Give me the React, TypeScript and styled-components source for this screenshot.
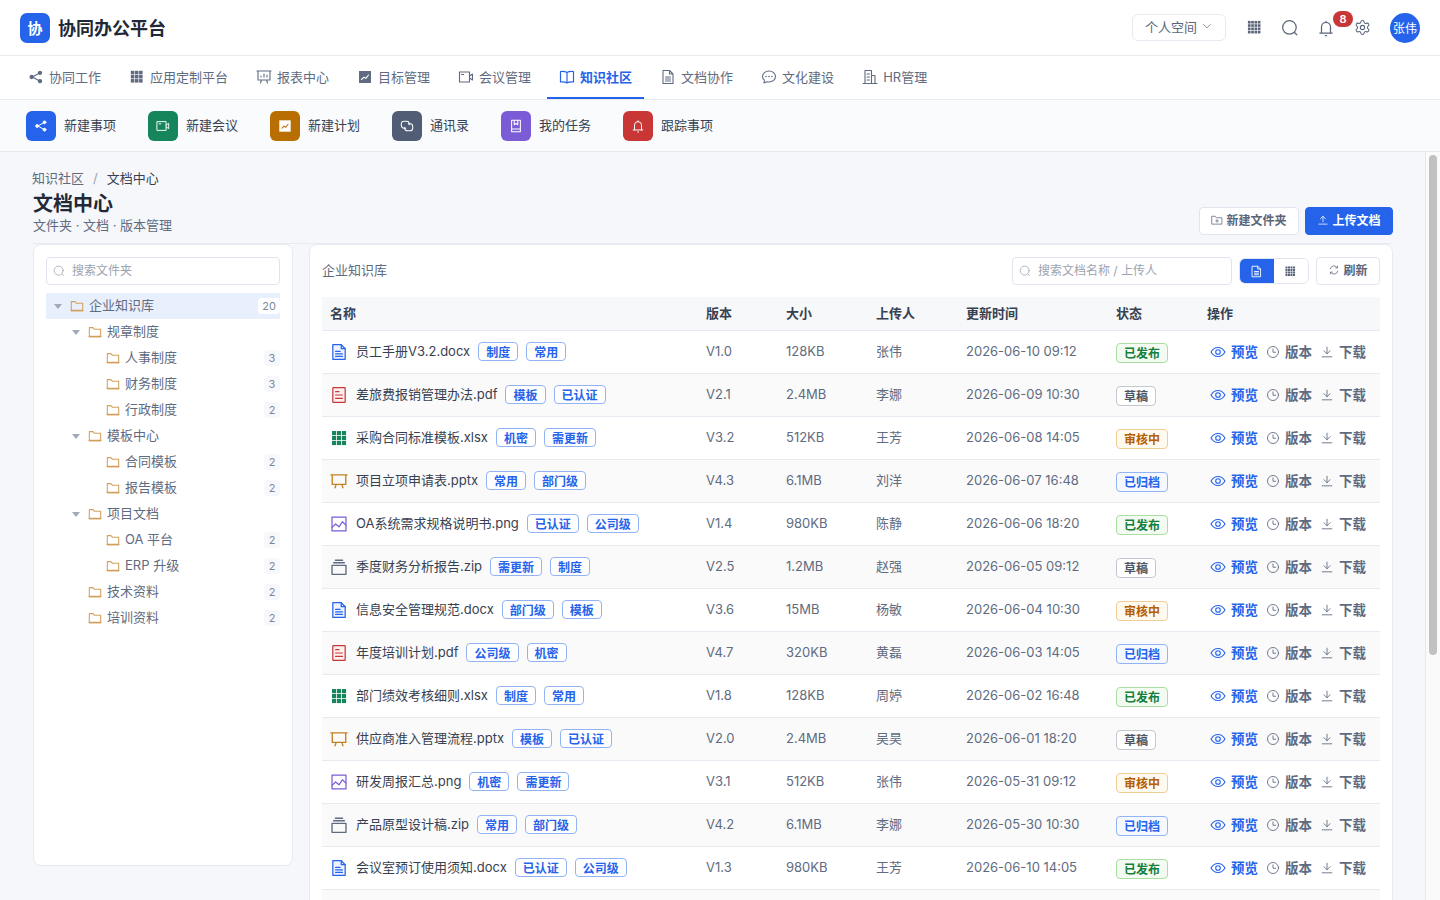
import React from "react";
import styled, { createGlobalStyle } from "styled-components";

const Global = createGlobalStyle`
  * { box-sizing: border-box; }
  html, body { margin: 0; padding: 0; height: 100%; overflow: hidden; }
  body { font-family: Inter, "Noto Sans CJK SC", "Noto Sans", sans-serif; color: #1f2937; background: #f6f7fb; }
  input { font-family: inherit; }
  input::placeholder { color: #9ca3af; }
`;

const Shell = styled.div`display:flex;flex-direction:column;height:100vh;`;
const Header = styled.header`flex:none;height:56px;background:#fff;border-bottom:1px solid #e8eaef;display:flex;align-items:center;padding:0 20px;`;
const Logo = styled.div`width:30px;height:30px;border-radius:7px;background:#2563eb;color:#fff;font-size:15px;font-weight:700;display:flex;align-items:center;justify-content:center;padding-bottom:1px;`;
const Brand = styled.div`margin-left:8px;font-size:18px;font-weight:600;color:#1f2937;padding-bottom:2px;`;
const HeaderRight = styled.div`margin-left:auto;display:flex;align-items:center;`;
const SpaceSelect = styled.div`width:94px;height:27px;border:1px solid #e8eaf2;border-radius:6px;display:flex;align-items:center;padding:0 0 3px 12px;gap:4px;font-size:13px;color:#5b6579;margin-right:10px;`;
const HeadIcon = styled.span`position:relative;width:36px;height:30px;display:flex;align-items:center;justify-content:center;color:#5b6579;`;
const Badge = styled.span`position:absolute;left:25px;top:-2px;width:20px;height:16px;border-radius:8px;background:#c93636;color:#fff;font-size:11px;font-weight:600;display:flex;align-items:center;justify-content:center;`;
const Avatar = styled.div`margin-left:10px;width:30px;height:30px;border-radius:50%;background:#2563eb;color:#fff;font-size:12px;display:flex;align-items:center;justify-content:center;`;

const Nav = styled.nav`flex:none;height:44px;background:#fff;border-bottom:1px solid #e8eaef;display:flex;gap:4px;padding-left:16px;`;
const NavItem = styled.a<{ $active?: boolean }>`height:43px;display:flex;align-items:center;gap:5px;padding:0 12px 1px;font-size:13px;
  color:${p => (p.$active ? "#2563eb" : "#5f6b80")};font-weight:${p => (p.$active ? 600 : 400)};
  box-shadow:${p => (p.$active ? "inset 0 -2px 0 #2563eb" : "none")};`;
const NavLabel = styled.span`padding-bottom:2px;`;

const Quick = styled.div`flex:none;height:52px;background:#fafbfd;border-bottom:1px solid #e8eaef;display:flex;align-items:center;gap:32px;padding-left:26px;`;
const QuickItem = styled.div`display:flex;align-items:center;gap:8px;font-size:13px;color:#374151;`;
const QuickIcon = styled.span<{ $bg: string }>`width:30px;height:30px;border-radius:6px;background:${p => p.$bg};color:#fff;display:flex;align-items:center;justify-content:center;`;
const QuickLabel = styled.span`padding-bottom:2px;`;

const Body = styled.div`flex:1;min-height:0;display:flex;`;
const Main = styled.main`flex:1;min-width:0;overflow-y:auto;scrollbar-width:none;background:#f6f7fb;padding:17px 32px 32px 33px;`;
const ScrollRail = styled.div`flex:none;width:15px;background:#fafafa;border-left:1px solid #e8e8e8;padding:3px 3px 0;`;
const ScrollThumb = styled.div`height:500px;border-radius:4px;background:#c1c1c1;`;

const PageHead = styled.div`display:flex;justify-content:space-between;align-items:flex-end;height:75px;border-bottom:1px solid #e8eaf0;padding-bottom:8px;`;
const PageInfo = styled.div`margin-bottom:1px;`;
const Crumbs = styled.div`font-size:13px;line-height:18px;color:#374151;margin-left:-1px;display:flex;`;
const CrumbLink = styled.span`color:#5f6b80;`;
const CrumbSep = styled.span`color:#9ca3af;margin:0 9px;`;
const PageTitle = styled.h1`margin:5px 0 0;font-size:20px;line-height:24px;font-weight:700;color:#1f2937;`;
const PageSub = styled.div`margin-top:0;font-size:13px;line-height:18px;color:#5f6b80;`;
const HeadActions = styled.div`display:flex;gap:6px;`;
const Button = styled.button<{ $primary?: boolean }>`height:28px;border-radius:4px;padding:0 11.5px 3px;display:flex;align-items:center;gap:3px;white-space:nowrap;font:600 12px Inter,"Noto Sans CJK SC",sans-serif;
  background:${p => (p.$primary ? "#2563eb" : "#fff")};color:${p => (p.$primary ? "#fff" : "#5b6579")};border:1px solid ${p => (p.$primary ? "#2563eb" : "#e1e4ee")};`;

const Columns = styled.div`display:grid;grid-template-columns:260px 1084px;gap:16px;align-items:start;`;
const TreePanel = styled.aside`height:622px;background:#fff;border:1px solid #e8eaf2;border-radius:8px;padding:12px;`;
const TablePanel = styled.section`background:#fff;border:1px solid #e8eaf2;border-radius:8px;padding:12px;`;
const SearchBox = styled.label<{ $w?: number }>`height:28px;width:${p => (p.$w ? p.$w + "px" : "100%")};border:1px solid #e1e4ee;border-radius:4px;display:flex;align-items:center;gap:5px;padding:0 6px;color:#a3a9b5;background:#fff;`;
const SearchInput = styled.input`border:0;outline:0;flex:1;min-width:0;font-size:12px;background:transparent;color:#374151;padding:0 2px 1px;`;
const Tree = styled.div`margin-top:8px;`;
const TreeRow = styled.div<{ $level: number; $selected?: boolean }>`height:26px;display:flex;align-items:center;font-size:13px;color:#5f6b80;padding-left:${p => 8 + p.$level * 18}px;background:${p => (p.$selected ? "#e8effd" : "transparent")};`;
const Caret = styled.span<{ $hidden?: boolean }>`width:0;height:0;border-left:4px solid transparent;border-right:4px solid transparent;border-top:5px solid ${p => (p.$hidden ? "transparent" : "#a3a9b5")};margin-right:7.5px;flex:none;`;
const FolderWrap = styled.span`display:flex;margin-right:5.5px;color:#d2a05c;`;
const TreeLabel = styled.span`padding-bottom:3px;`;
const Count = styled.span<{ $selected?: boolean }>`margin-left:auto;min-width:16px;height:16px;padding:0 4px;border-radius:4px;font-size:11px;display:flex;align-items:center;justify-content:center;color:#7d8799;background:${p => (p.$selected ? "#fff" : "#f7f8fb")};`;

const Toolbar = styled.div`display:flex;align-items:center;height:28px;margin-bottom:12px;`;
const LibTitle = styled.div`font-size:13px;color:#5f6b80;margin-right:auto;padding-bottom:3px;`;
const Segment = styled.div`margin-left:7px;height:26px;width:70px;border:1px solid #e1e4ee;border-radius:6px;display:flex;overflow:hidden;`;
const SegBtn = styled.span<{ $on?: boolean }>`flex:1;display:flex;align-items:center;justify-content:center;background:${p => (p.$on ? "#2563eb" : "#fff")};color:${p => (p.$on ? "#fff" : "#5b6579")};`;
const RefreshBtn = styled(Button)`margin-left:7px;`;

const Table = styled.table`width:100%;table-layout:fixed;border-collapse:collapse;font-size:13px;`;
const Th = styled.th<{ $w?: number }>`width:${p => (p.$w ? p.$w + "px" : "auto")};height:33px;text-align:left;padding:0 8px 1px;font-weight:600;font-size:13px;color:#374151;background:#f7f8fa;border-bottom:1px solid #e8eaf2;`;
const Tr = styled.tr<{ $alt: boolean }>`background:${p => (p.$alt ? "#fafafa" : "#fff")};`;
const Td = styled.td`height:43px;padding:0 8px 2px;border-bottom:1px solid #e8eaf2;color:#5f6b80;white-space:nowrap;`;
const NameCell = styled.div`display:flex;align-items:center;color:#374151;`;
const FileIcon = styled.span<{ $c: string; $t: string }>`display:flex;width:18px;margin:2px 8px 0 0;color:${p => p.$c};--tint:${p => p.$t};`;
const Tag = styled.span`margin:2px 0 0 8px;height:19px;padding:0 7px 1px;border:1px solid #93b4f4;border-radius:4px;background:#fff;color:#2563eb;font-size:12px;font-weight:600;display:flex;align-items:center;`;
const Status = styled.span<{ $k: string }>`display:inline-flex;height:20px;align-items:center;padding:0 7px 1px;border-radius:4px;font-size:12px;font-weight:600;position:relative;top:2px;
  color:${p => ({ pub: "#15803d", draft: "#4b5563", rev: "#b45f06", arc: "#2563eb" } as Record<string, string>)[p.$k]};
  border:1px solid ${p => ({ pub: "#a9dfa0", draft: "#c4c8d0", rev: "#f0cd94", arc: "#93b4f4" } as Record<string, string>)[p.$k]};
  background:${p => ({ pub: "#f3fbf3", draft: "#fff", rev: "#fffaf0", arc: "#f5f8ff" } as Record<string, string>)[p.$k]};`;
const Ops = styled.div`display:flex;align-items:center;margin-left:3px;`;
const Op = styled.span<{ $primary?: boolean }>`display:flex;align-items:center;gap:5px;margin-right:8px;font-size:13.5px;font-weight:600;color:${p => (p.$primary ? "#2563eb" : "#5f6b80")};`;
const OpIcon = styled.span`display:flex;margin-top:2px;`;

type IP = { s?: number };
const Svg: React.FC<React.PropsWithChildren<IP & { sw?: number }>> = ({ s = 14, sw = 1.4, children }) => (
  <svg width={s} height={s} viewBox="0 0 16 16" fill="none" stroke="currentColor" strokeWidth={sw} strokeLinecap="round" strokeLinejoin="round">{children}</svg>
);
const IShare = ({ s }: IP) => <Svg s={s} sw={1.1}><path d="M11.5 4 4.5 8l7 4" /><circle cx="12" cy="3.8" r="1.6" fill="currentColor" /><circle cx="3.6" cy="8" r="1.6" fill="currentColor" /><circle cx="12" cy="12.2" r="1.6" fill="currentColor" /></Svg>;
const IGrid = ({ s, n = 3 }: IP & { n?: number }) => {
  const step = 12.4 / n;
  const pos = Array.from({ length: n }, (_, i) => 1.8 + i * step);
  return <Svg s={s}><g fill="currentColor" stroke="none">{pos.flatMap(x => pos.map(y => <rect key={x + "-" + y} x={x} y={y} width={step - 0.6} height={step - 0.6} />))}</g></Svg>;
};
const IReport = ({ s }: IP) => <Svg s={s} sw={1.1}><path d="M1 2h14M2 2v9h12V2M5.5 11l-1 3M10.5 11l1 3" /><path d="M5 8V7M8 8V5M11 8V6" /></Svg>;
const ITarget = ({ s }: IP) => <Svg s={s}><rect x="2" y="2" width="12" height="12" fill="currentColor" stroke="none" /><path d="M4.5 10.5 7 8.2l1.8 1.2L11.5 6" stroke="#fff" strokeWidth="1.1" /></Svg>;
const IPlan = ({ s }: IP) => <Svg s={s}><rect x="1.5" y="1.5" width="13" height="13" fill="#fff" stroke="none" /><path d="M4.5 10.5 7 8.2l1.8 1.2L11.5 6" stroke="#b86e00" strokeWidth="1.2" /></Svg>;
const IVideo = ({ s }: IP) => <Svg s={s} sw={1.1}><rect x="1.5" y="3" width="10" height="10" /><path d="M11.5 7 14.5 5v6l-3-2" /><path d="M3.5 5.5h2" /></Svg>;
const IBook = ({ s }: IP) => <Svg s={s} sw={1.2}><path d="M8 3.5C6.5 2.5 4 2.3 1.5 2.5v10.5c2.5-.2 5 0 6.5 1 1.5-1 4-1.2 6.5-1V2.5C12 2.3 9.5 2.5 8 3.5ZM8 3.5V14" /></Svg>;
const IDoc = ({ s }: IP) => <Svg s={s} sw={1.1}><path d="M3 1.5h6.5L13 5v9.5H3ZM9.5 1.5V5H13M5.5 8h5M5.5 10h5M5.5 12h5" /></Svg>;
const IChat = ({ s }: IP) => <Svg s={s} sw={1.1}><path d="M8 2c3.6 0 6.5 2.5 6.5 5.5S11.6 13 8 13c-.8 0-1.5-.1-2.2-.3L3 14l.4-2.8C2.2 10.2 1.5 8.9 1.5 7.5 1.5 4.5 4.4 2 8 2Z" /><g fill="currentColor" stroke="none"><circle cx="5" cy="7.5" r=".8" /><circle cx="8" cy="7.5" r=".8" /><circle cx="11" cy="7.5" r=".8" /></g></Svg>;
const IBuilding = ({ s }: IP) => <Svg s={s} sw={1.1}><path d="M1 14.5h14M3 14.5V1.5h6.5v13M9.5 6.5H13v8M5 5h2.5M5 8h2.5M5 11h2.5" /></Svg>;
const ISearch = ({ s }: IP) => <Svg s={s} sw={1.1}><circle cx="7.5" cy="7.5" r="6" /><path d="m12 12 2 2" /></Svg>;
const IBell = ({ s }: IP) => <Svg s={s} sw={1.1}><path d="M2.5 12.5h11M4 12.5V7a4 4 0 0 1 8 0v5.5M7.5 14.8h1M8 3V2" /></Svg>;
const IGear = ({ s }: IP) => <svg width={s} height={s} viewBox="0 0 24 24" fill="none" stroke="currentColor" strokeWidth="1.5" strokeLinecap="round" strokeLinejoin="round"><path d="M9.671 4.136a2.34 2.34 0 0 1 4.659 0 2.34 2.34 0 0 0 3.319 1.915 2.34 2.34 0 0 1 2.33 4.033 2.34 2.34 0 0 0 0 3.831 2.34 2.34 0 0 1-2.33 4.033 2.34 2.34 0 0 0-3.319 1.915 2.34 2.34 0 0 1-4.659 0 2.34 2.34 0 0 0-3.32-1.915 2.34 2.34 0 0 1-2.33-4.033 2.34 2.34 0 0 0 0-3.831A2.34 2.34 0 0 1 6.35 6.051a2.34 2.34 0 0 0 3.319-1.915" /><circle cx="12" cy="12" r="3" /></svg>;
const IChevron = ({ s }: IP) => <Svg s={s} sw={1}><path d="m3.5 6 4.5 4.5L12.5 6" /></Svg>;
const IChain = ({ s }: IP) => <Svg s={s} sw={1.2}><path d="M6.5 10.5H4.5a3 3 0 0 1-3-3V5.5a3 3 0 0 1 3-3h3a3 3 0 0 1 3 3v1" /><path d="M9.5 5.5h2a3 3 0 0 1 3 3v2a3 3 0 0 1-3 3h-3a3 3 0 0 1-3-3v-1" /></Svg>;
const ITaskBook = ({ s }: IP) => <Svg s={s} sw={1.2}><path d="M3 1.5h10v13H3ZM3 11.5h10M6 1.5v5l2-1.3 2 1.3v-5" /></Svg>;
const IFolder = ({ s = 14 }: IP) => <Svg s={s} sw={1.2}><path d="M1.5 3h4.2l1.5 1.8h7.3v8.7h-13Z" /><path d="M1.5 13.2h13" strokeWidth="1.8" /></Svg>;
const IFolderAdd = ({ s }: IP) => <Svg s={s} sw={1}><path d="M1.5 3h4.2l1.5 2h7.3v8.5h-13ZM8 7.5V11M6.3 9.2h3.4" /></Svg>;
const IUpload = ({ s }: IP) => <Svg s={s} sw={1}><path d="M2.5 13.5h11M8 10.5V3M4.5 6.5 8 3l3.5 3.5" /></Svg>;
const IDownload = ({ s }: IP) => <Svg s={s} sw={1}><path d="M2.5 13.5h11M8 2.5V10M4.5 6.5 8 10l3.5-3.5" /></Svg>;
const IRefresh = ({ s }: IP) => <Svg s={s} sw={1}><path d="M3 6.5A5.2 5.2 0 0 1 12.5 5M13 9.5A5.2 5.2 0 0 1 3.5 11M12.7 2.8v2.4h-2.4M3.3 13.2v-2.4h2.4" /></Svg>;
const IEye = ({ s }: IP) => <Svg s={s} sw={1.1}><path d="M1 8c1.7-3 4-4.5 7-4.5S13.300 5 15 8c-1.700 3-4 4.500-7 4.500S2.700 11 1 8Z" /><circle cx="8" cy="8" r="2.300" /></Svg>;
const IClock = ({ s }: IP) => <Svg s={s} sw={1}><circle cx="8" cy="8" r="6.3" /><path d="M8 4.5v3.8h3" /></Svg>;
const FDoc = ({ s }: IP) => <Svg s={s} sw={1.1}><path d="M2.5 1.5H10l3.5 3.5v9.5h-11Z" fill="var(--tint)" /><path d="M10 1.5V5h3.500M5 7.500h4M5 9.700h6M5 11.900h6" /></Svg>;
const FPdf = ({ s }: IP) => <Svg s={s} sw={1.1}><rect x="2.5" y="1.5" width="11" height="13" rx="0.5" fill="var(--tint)" /><path d="M5 5h3M5 8h6M5 11h6" /></Svg>;
const FXls = ({ s }: IP) => <Svg s={s}><g fill="currentColor" stroke="none">{[1.8, 6.2, 10.6].flatMap(x => [1.8, 6.2, 10.6].map(y => <rect key={x + "-" + y} x={x} y={y} width="3.7" height="3.7" />))}</g></Svg>;
const FPpt = ({ s }: IP) => <Svg s={s} sw={1.2}><path d="M.8 2.5h14.4M2 2.5V11h12V2.5M5.5 11l-1 3M10.5 11l1 3" /></Svg>;
const FImg = ({ s }: IP) => <Svg s={s} sw={1.1}><rect x="1.8" y="1.8" width="12.4" height="12.4" /><path d="m1.8 11 3.2-3 3 2.5 3-4.5 3.2 3" /></Svg>;
const FZip = ({ s }: IP) => <Svg s={s} sw={1.2}><path d="M1.8 6.5h12.4v8H1.8ZM3.2 4.2h9.6M4.800 2h6.400" /></Svg>;

const navs: [string, React.FC<IP>, boolean?][] = [["协同工作", IShare], ["应用定制平台", IGrid], ["报表中心", IReport], ["目标管理", ITarget], ["会议管理", IVideo], ["知识社区", IBook, true], ["文档协作", IDoc], ["文化建设", IChat], ["HR管理", IBuilding]];
const quicks: [string, React.FC<IP>, string][] = [["新建事项", IShare, "#2563eb"], ["新建会议", IVideo, "#16855c"], ["新建计划", IPlan, "#b86e00"], ["通讯录", IChain, "#505d75"], ["我的任务", ITaskBook, "#7c5cd6"], ["跟踪事项", IBell, "#c93636"]];
const tree: [string, number, boolean, number?, boolean?][] = [
  ["企业知识库", 0, true, 20, true], ["规章制度", 1, true], ["人事制度", 2, false, 3], ["财务制度", 2, false, 3], ["行政制度", 2, false, 2],
  ["模板中心", 1, true], ["合同模板", 2, false, 2], ["报告模板", 2, false, 2], ["项目文档", 1, true], ["OA 平台", 2, false, 2], ["ERP 升级", 2, false, 2],
  ["技术资料", 1, false, 2], ["培训资料", 1, false, 2],
];
const kindOf: Record<string, [React.FC<IP>, string, string]> = {
  docx: [FDoc, "#2563eb", "#eef3fe"], pdf: [FPdf, "#c93636", "#fdf1f1"], xlsx: [FXls, "#16855c", "none"], pptx: [FPpt, "#c4801f", "none"], png: [FImg, "#7c5cd6", "none"], zip: [FZip, "#5f6b80", "none"],
};
const files = ["员工手册V3.2.docx", "差旅费报销管理办法.pdf", "采购合同标准模板.xlsx", "项目立项申请表.pptx", "OA系统需求规格说明书.png", "季度财务分析报告.zip", "信息安全管理规范.docx", "年度培训计划.pdf", "部门绩效考核细则.xlsx", "供应商准入管理流程.pptx", "研发周报汇总.png", "产品原型设计稿.zip", "会议室预订使用须知.docx", "品牌视觉规范.pdf", "年度预算总表.xlsx", "新员工入职培训.pptx", "办公区平面图.png", "历史归档资料.zip", "合同审批流程说明.docx", "数据安全白皮书.pdf"];
const tagSets = [["制度", "常用"], ["模板", "已认证"], ["机密", "需更新"], ["常用", "部门级"], ["已认证", "公司级"], ["需更新", "制度"], ["部门级", "模板"], ["公司级", "机密"]];
const vers = ["V1.0", "V2.1", "V3.2", "V4.3", "V1.4", "V2.5", "V3.6", "V4.7", "V1.8", "V2.0", "V3.1", "V4.2", "V1.3"];
const sizes = ["128KB", "2.4MB", "512KB", "6.1MB", "980KB", "1.2MB", "15MB", "320KB"];
const users = ["张伟", "李娜", "王芳", "刘洋", "陈静", "赵强", "杨敏", "黄磊", "周婷", "吴昊"];
const dates = ["2026-06-10 09:12", "2026-06-09 10:30", "2026-06-08 14:05", "2026-06-07 16:48", "2026-06-06 18:20", "2026-06-05 09:12", "2026-06-04 10:30", "2026-06-03 14:05", "2026-06-02 16:48", "2026-06-01 18:20", "2026-05-31 09:12", "2026-05-30 10:30", "2026-06-10 14:05"];
const statuses: [string, string][] = [["已发布", "pub"], ["草稿", "draft"], ["审核中", "rev"], ["已归档", "arc"]];

export default function App() {
  return (
    <Shell>
      <Global />
      <Header>
        <Logo>协</Logo>
        <Brand>协同办公平台</Brand>
        <HeaderRight>
          <SpaceSelect>个人空间<IChevron s={12} /></SpaceSelect>
          <HeadIcon><IGrid s={17} n={4} /></HeadIcon>
          <HeadIcon><ISearch s={18} /></HeadIcon>
          <HeadIcon><IBell s={18} /><Badge>8</Badge></HeadIcon>
          <HeadIcon><IGear s={17} /></HeadIcon>
          <Avatar>张伟</Avatar>
        </HeaderRight>
      </Header>
      <Nav>
        {navs.map(([t, I, a]) => <NavItem key={t} $active={a}><I s={16} /><NavLabel>{t}</NavLabel></NavItem>)}
      </Nav>
      <Quick>
        {quicks.map(([t, I, c]) => <QuickItem key={t}><QuickIcon $bg={c}><I s={14} /></QuickIcon><QuickLabel>{t}</QuickLabel></QuickItem>)}
      </Quick>
      <Body>
        <Main>
          <PageHead>
            <PageInfo>
              <Crumbs><CrumbLink>知识社区</CrumbLink><CrumbSep>/</CrumbSep>文档中心</Crumbs>
              <PageTitle>文档中心</PageTitle>
              <PageSub>文件夹 · 文档 · 版本管理</PageSub>
            </PageInfo>
            <HeadActions>
              <Button><IFolderAdd s={12} />新建文件夹</Button>
              <Button $primary><IUpload s={12} />上传文档</Button>
            </HeadActions>
          </PageHead>
          <Columns>
            <TreePanel>
              <SearchBox><ISearch s={12} /><SearchInput placeholder="搜索文件夹" /></SearchBox>
              <Tree>
                {tree.map(([t, l, open, n, sel]) => (
                  <TreeRow key={t} $level={l} $selected={sel}>
                    <Caret $hidden={!open} />
                    <FolderWrap><IFolder s={14} /></FolderWrap>
                    <TreeLabel>{t}</TreeLabel>
                    {n !== undefined && <Count $selected={sel}>{n}</Count>}
                  </TreeRow>
                ))}
              </Tree>
            </TreePanel>
            <TablePanel>
              <Toolbar>
                <LibTitle>企业知识库</LibTitle>
                <SearchBox $w={220}><ISearch s={12} /><SearchInput placeholder="搜索文档名称 / 上传人" /></SearchBox>
                <Segment><SegBtn $on><IDoc s={13} /></SegBtn><SegBtn><IGrid s={13} n={4} /></SegBtn></Segment>
                <RefreshBtn><IRefresh s={12} />刷新</RefreshBtn>
              </Toolbar>
              <Table>
                <thead>
                  <tr><Th>名称</Th><Th $w={80}>版本</Th><Th $w={90}>大小</Th><Th $w={90}>上传人</Th><Th $w={150}>更新时间</Th><Th $w={91}>状态</Th><Th $w={181}>操作</Th></tr>
                </thead>
                <tbody>
                  {files.map((f, i) => {
                    const [I, c, t] = kindOf[f.split(".").pop() as string];
                    const st = statuses[i % 4];
                    return (
                      <Tr key={f} $alt={i % 2 === 1}>
                        <Td><NameCell><FileIcon $c={c} $t={t}><I s={18} /></FileIcon>{f}{tagSets[i % 8].map(g => <Tag key={g}>{g}</Tag>)}</NameCell></Td>
                        <Td>{vers[i % 13]}</Td>
                        <Td>{sizes[i % 8]}</Td>
                        <Td>{users[i % 10]}</Td>
                        <Td>{dates[i % 13]}</Td>
                        <Td><Status $k={st[1]}>{st[0]}</Status></Td>
                        <Td><Ops>
                          <Op $primary><OpIcon><IEye s={16} /></OpIcon>预览</Op>
                          <Op><OpIcon><IClock s={14} /></OpIcon>版本</Op>
                          <Op><OpIcon><IDownload s={14} /></OpIcon>下载</Op>
                        </Ops></Td>
                      </Tr>
                    );
                  })}
                </tbody>
              </Table>
            </TablePanel>
          </Columns>
        </Main>
        <ScrollRail><ScrollThumb /></ScrollRail>
      </Body>
    </Shell>
  );
}
